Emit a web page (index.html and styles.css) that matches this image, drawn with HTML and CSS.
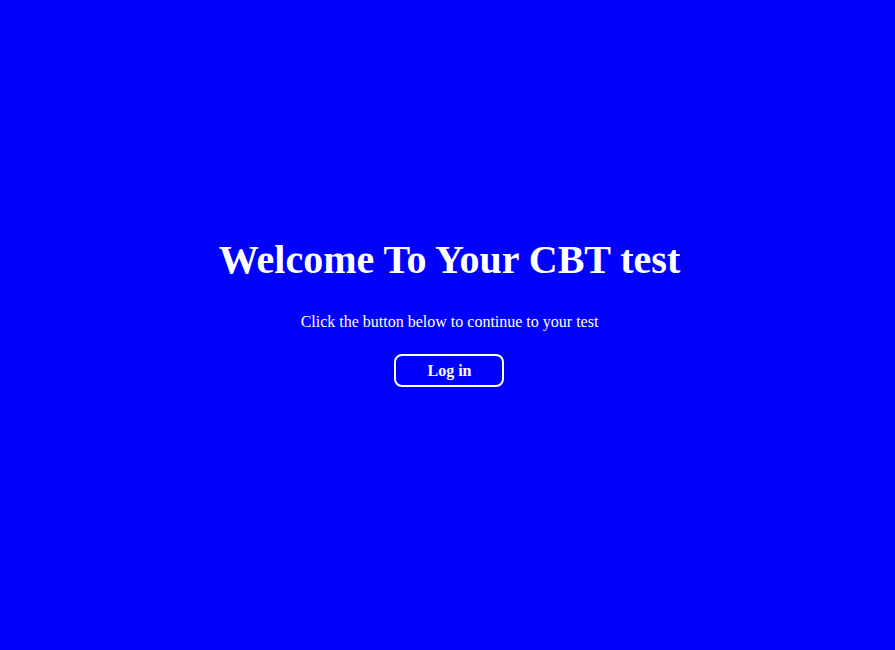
FILE: index.html
```html
<!DOCTYPE html>
<html>
<head>
<meta charset="utf-8">
<link rel="stylesheet" href="styles.css">
</head>
<body>
<main class="page">
  <div class="welcome">
    <h1 class="title">Welcome To Your CBT test</h1>
    <p class="lead">Click the button below to continue to your test</p>
    <button class="login">Log in</button>
  </div>
</main>
</body>
</html>
```
FILE: styles.css
```css
html, body {
  margin: 0;
  padding: 0;
  height: 100%;
}
body {
  background: #0000ff;
  color: #ffffff;
  font-family: "Liberation Serif", "Times New Roman", serif;
}
.page {
  height: 100%;
  display: flex;
  align-items: center;
  justify-content: center;
  padding: 0 0 26px 4px;
  box-sizing: border-box;
}
.welcome {
  display: flex;
  flex-direction: column;
  align-items: center;
  text-align: center;
}
.title {
  font-size: 40px;
  font-weight: bold;
  margin: 0 0 30px;
  line-height: 46px;
}
.lead {
  font-size: 16px;
  margin: 0 0 23px;
  line-height: 18px;
}
.login {
  width: 110px;
  height: 33px;
  background: transparent;
  color: #ffffff;
  border: 2px solid #ffffff;
  border-radius: 8px;
  font-family: "Liberation Serif", "Times New Roman", serif;
  font-size: 16px;
  font-weight: bold;
  padding: 0 0 0 0;
  cursor: pointer;
}
```
